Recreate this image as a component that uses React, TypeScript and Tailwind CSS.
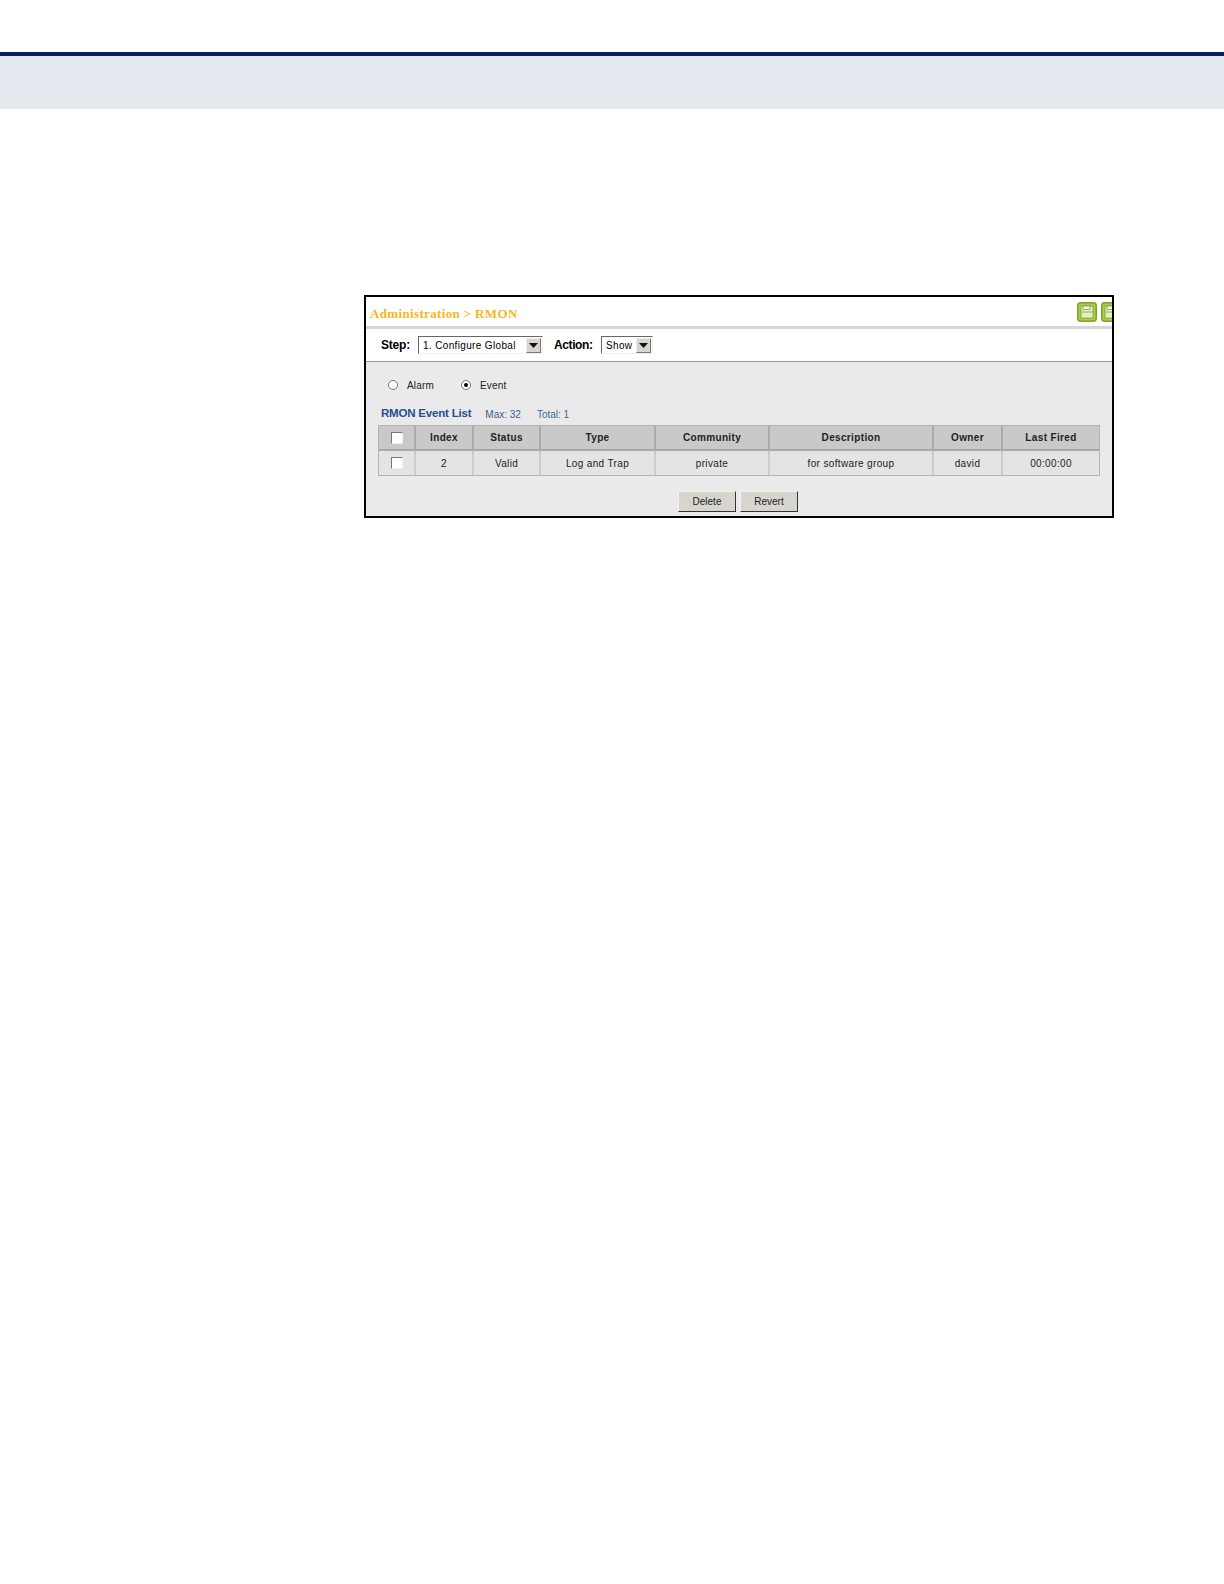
const cols = [
  { w: 'w-[37px]', h: '', v: '' },
  { w: 'w-[58px]', h: 'Index', v: '2' },
  { w: 'w-[67px]', h: 'Status', v: 'Valid' },
  { w: 'w-[115px]', h: 'Type', v: 'Log and Trap' },
  { w: 'w-[114px]', h: 'Community', v: 'private' },
  { w: 'w-[164px]', h: 'Description', v: 'for software group' },
  { w: 'w-[69px]', h: 'Owner', v: 'david' },
  { w: 'flex-1', h: 'Last Fired', v: '00:00:00' },
];

function Check() {
  return <span className="block w-[12px] h-[12px] bg-white border border-[#f0f0f0] border-l-[#777] border-t-[#777]" />;
}

function Arrow() {
  return (
    <span className="w-[15px] h-[15px] bg-[#d8d5d0] border border-[#eee] border-r-[#777] border-b-[#777] flex items-center justify-center">
      <svg width="9" height="5" viewBox="0 0 9 5"><path d="M0 0h9L4.5 5z" fill="#111" /></svg>
    </span>
  );
}

export default function App() {
  return (
    <div className="w-[1224px] h-[1584px] bg-white pt-[52px] font-['Liberation_Sans',sans-serif] overflow-hidden">
      <div className="h-[57px] bg-[#e4e8ef] border-t-4 border-[#04205f]" />
      <div className="ml-[364px] mt-[186px] w-[750px] h-[223px] border-2 border-black bg-white overflow-hidden">
        <div className="h-[32px] flex items-start justify-between border-b-[3px] border-[#d6d6d6] pl-[4px]">
          <span className="mt-[9px] font-['Liberation_Serif',serif] font-bold text-[13px] leading-[16px] tracking-[0.35px] text-[#f5b71d]">Administration &gt; RMON</span>
          <div className="flex gap-[4px] mt-[5px] -mr-[9px] shrink-0">
            {[0, 1].map((i) => (
              <svg key={i} width="20" height="20" viewBox="0 0 20 20">
                <rect x="0.75" y="0.75" width="18.5" height="18.5" rx="3" fill="#a6cf4b" stroke="#7da320" strokeWidth="1.5" />
                <rect x="4" y="4" width="12" height="12" fill="#e4efc4" stroke="#7f9f3a" strokeWidth="0.8" />
                <path d="M6 4h7v3.5H6zM4 10h12" fill="#f5f8e8" stroke="#7f9f3a" strokeWidth="0.8" />
              </svg>
            ))}
          </div>
        </div>
        <div className="h-[32px] flex items-center pl-[15px] text-[11px] text-black">
          <span className="font-bold text-[12px] w-[37px] tracking-[-0.2px]">Step:</span>
          <div className="ml-[0px] w-[125px] h-[18px] border border-[#eee] border-l-[#666] border-t-[#666] bg-white flex items-center justify-between pl-[4px] pr-[1px] text-[10px] tracking-[0.35px]">
            <span>1. Configure Global</span>
            <Arrow />
          </div>
          <span className="font-bold text-[12px] ml-[11px] w-[47px] tracking-[-0.4px]">Action:</span>
          <div className="w-[52px] h-[18px] border border-[#eee] border-l-[#666] border-t-[#666] bg-white flex items-center justify-between pl-[4px] pr-[1px] text-[10px] tracking-[0.35px]">
            <span>Show</span>
            <Arrow />
          </div>
        </div>
        <div className="h-[155px] bg-[#eaeaea] border-t border-[#999] pl-[12px] pr-[12px]">
          <div className="h-[46px] flex items-center pl-[10px] text-[10px] text-[#222] tracking-[0.2px]">
            <span className="w-[10px] h-[10px] rounded-full border border-[#777] bg-white" />
            <span className="ml-[9px] w-[42px]">Alarm</span>
            <span className="ml-[12px] w-[10px] h-[10px] rounded-full border border-[#777] bg-white flex items-center justify-center">
              <span className="w-[4px] h-[4px] rounded-full bg-black" />
            </span>
            <span className="ml-[9px]">Event</span>
          </div>
          <div className="h-[14px] -mt-[1px] flex items-center pl-[3px]">
            <span className="font-bold text-[11.5px] tracking-[-0.2px] text-[#24508f]">RMON Event List</span>
            <span className="ml-[14px] text-[10px] text-[#3a5c8c]">Max: 32</span>
            <span className="ml-[16px] text-[10px] text-[#3a6a99]">Total: 1</span>
          </div>
          <div className="mt-[4px] mr-[0px] border border-[#b4b4b4]">
            <div className="h-[25px] flex bg-[#c9c9c9] border-b-2 border-[#aaa]">
              {cols.map((c, i) => (
                <div key={i} className={`${c.w} shrink-0 flex items-center justify-center font-bold text-[10px] tracking-[0.35px] text-[#222] ${i < 7 ? 'border-r-2 border-[#aaa]' : ''}`}>
                  {i === 0 ? <Check /> : c.h}
                </div>
              ))}
            </div>
            <div className="h-[24px] flex bg-[#e4e4e4]">
              {cols.map((c, i) => (
                <div key={i} className={`${c.w} shrink-0 flex items-center justify-center text-[10px] tracking-[0.35px] text-[#222] ${i < 7 ? 'border-r-2 border-[#ccc]' : ''}`}>
                  {i === 0 ? <Check /> : c.v}
                </div>
              ))}
            </div>
          </div>
          <div className="mt-[15px] flex justify-center gap-[4px] pr-[2px]">
            <button className="w-[58px] h-[21px] bg-[#d8d5cf] border border-[#f2f2f2] border-r-[#333] border-b-[#333] text-[10px] text-[#222]">Delete</button>
            <button className="w-[58px] h-[21px] bg-[#d8d5cf] border border-[#f2f2f2] border-r-[#333] border-b-[#333] text-[10px] text-[#222]">Revert</button>
          </div>
        </div>
      </div>
    </div>
  );
}
